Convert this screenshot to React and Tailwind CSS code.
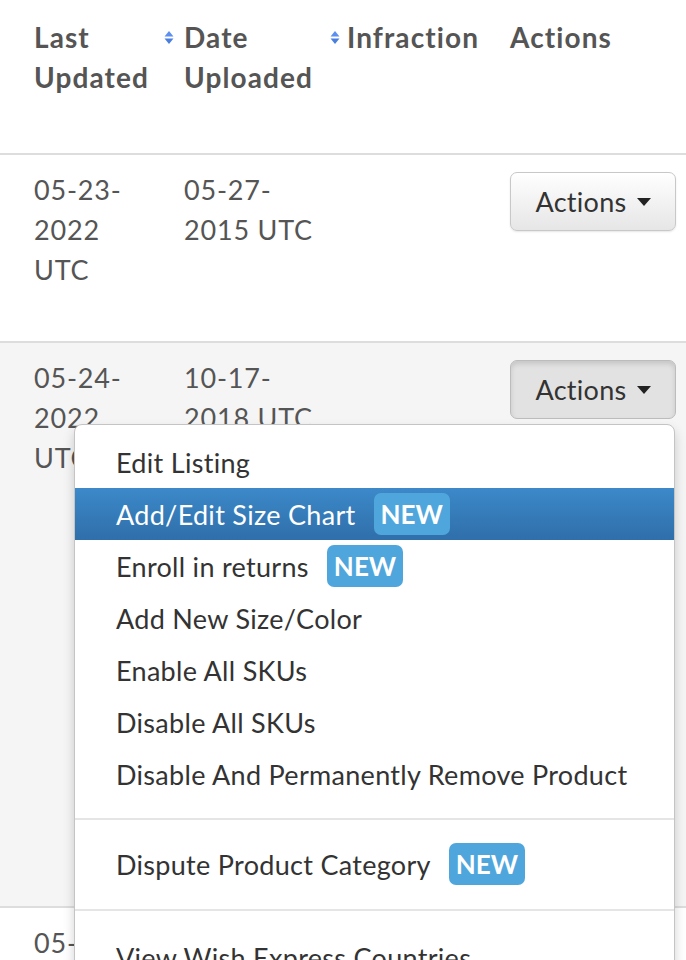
import React from 'react';

const SortIcon = () => (
  <svg width="10" height="15" viewBox="0 0 10 15" className="shrink-0 mt-[13px]">
    <path d="M5 1 L9.5 6.5 L0.5 6.5 Z" fill="#5b8ff0" />
    <path d="M0.5 8.5 L9.5 8.5 L5 14 Z" fill="#4a7fe0" />
  </svg>
);

const NewBadge = () => (
  <span className="ml-[18px] inline-flex items-center h-[42px] px-[7px] rounded-[7px] bg-[#4fa6dc] text-white font-bold text-[26px] tracking-normal leading-none">
    NEW
  </span>
);

const ActionsButton = ({ open }) => (
  <button
    className={
      open
        ? 'flex items-center justify-center gap-[10px] w-[166px] h-[59px] rounded-[7px] border border-[#bcbcbc] bg-[#e2e2e2] shadow-[inset_0_3px_5px_rgba(0,0,0,0.125)] text-[27px] tracking-[0.3px] text-[#333]'
        : 'flex items-center justify-center gap-[10px] w-[166px] h-[59px] rounded-[7px] border border-[#c8c8c8] bg-gradient-to-b from-white to-[#e6e6e6] shadow-[0_1px_2px_rgba(0,0,0,0.1)] text-[27px] tracking-[0.3px] text-[#333]'
    }
  >
    Actions
    <svg width="14" height="8" viewBox="0 0 14 8">
      <path d="M0 0 L14 0 L7 8 Z" fill="#222" />
    </svg>
  </button>
);

const menuItems = [
  { label: 'Edit Listing' },
  { label: 'Add/Edit Size Chart', isNew: true, active: true },
  { label: 'Enroll in returns', isNew: true },
  { label: 'Add New Size/Color' },
  { label: 'Enable All SKUs' },
  { label: 'Disable All SKUs' },
  { label: 'Disable And Permanently Remove Product' },
];

const MenuItem = ({ label, isNew, active }) => (
  <div
    className={
      active
        ? 'flex items-center h-[52px] px-[41px] whitespace-nowrap bg-gradient-to-b from-[#3c89c9] to-[#2f6faa] text-white'
        : 'flex items-center h-[52px] px-[41px] whitespace-nowrap text-[#333]'
    }
  >
    <span>{label}</span>
    {isNew && <NewBadge />}
  </div>
);

const App = () => {
  return (
    <div className="w-[686px] h-[960px] overflow-hidden bg-white font-['Lato',sans-serif] text-[27px] text-[#555]">
      {/* header */}
      <div className="grid grid-cols-[184px_163px_163px_1fr] h-[155px] border-b-2 border-[#dddddd] font-bold text-[28px] tracking-[1.1px] leading-[40px]">
        <div className="flex justify-between pl-[34px] pr-[10px] pt-[17px]">
          <span>Last<br />Updated</span>
          <SortIcon />
        </div>
        <div className="flex justify-between pr-[7px] pt-[17px]">
          <span>Date<br />Uploaded</span>
          <SortIcon />
        </div>
        <div className="pt-[17px]">Infraction</div>
        <div className="pt-[17px]">Actions</div>
      </div>

      {/* row 1 */}
      <div className="grid grid-cols-[184px_163px_163px_1fr] h-[188px] border-b-2 border-[#dddddd] tracking-[0.8px] leading-[40px]">
        <div className="pl-[34px] pt-[15px]">05-23-<br />2022<br />UTC</div>
        <div className="pt-[15px]">05-27-<br />2015 UTC</div>
        <div></div>
        <div className="pt-[17px]"><ActionsButton /></div>
      </div>

      {/* row 2 */}
      <div className="relative grid grid-cols-[184px_163px_163px_1fr] h-[565px] border-b-2 border-[#dddddd] bg-[#f5f5f5] tracking-[0.8px] leading-[40px]">
        <div className="pl-[34px] pt-[15px]">05-24-<br />2022<br />UTC</div>
        <div className="pt-[15px]">10-17-<br />2018 UTC</div>
        <div></div>
        <div className="pt-[17px]"><ActionsButton open /></div>

        <div className="absolute left-[74px] top-[81px] w-[601px] pt-[11px] bg-white border border-[#c4c4c4] rounded-[8px] shadow-[0_6px_12px_rgba(0,0,0,0.175)] tracking-[0.3px] leading-none">
          {menuItems.map((item) => (
            <MenuItem key={item.label} {...item} />
          ))}
          <div className="h-[2px] my-[18px] bg-[#e5e5e5]" />
          <MenuItem label="Dispute Product Category" isNew />
          <div className="h-[2px] mt-[19px] mb-[20px] bg-[#e5e5e5]" />
          <MenuItem label="View Wish Express Countries" />
          <div className="h-[40px]" />
        </div>
      </div>

      {/* row 3 */}
      <div className="grid grid-cols-[184px_163px_163px_1fr] tracking-[0.8px] leading-[40px]">
        <div className="pl-[34px] pt-[15px]">05-25-<br />2022<br />UTC</div>
        <div className="pt-[15px]">03-11-<br />2019 UTC</div>
      </div>
    </div>
  );
};

export default App;
